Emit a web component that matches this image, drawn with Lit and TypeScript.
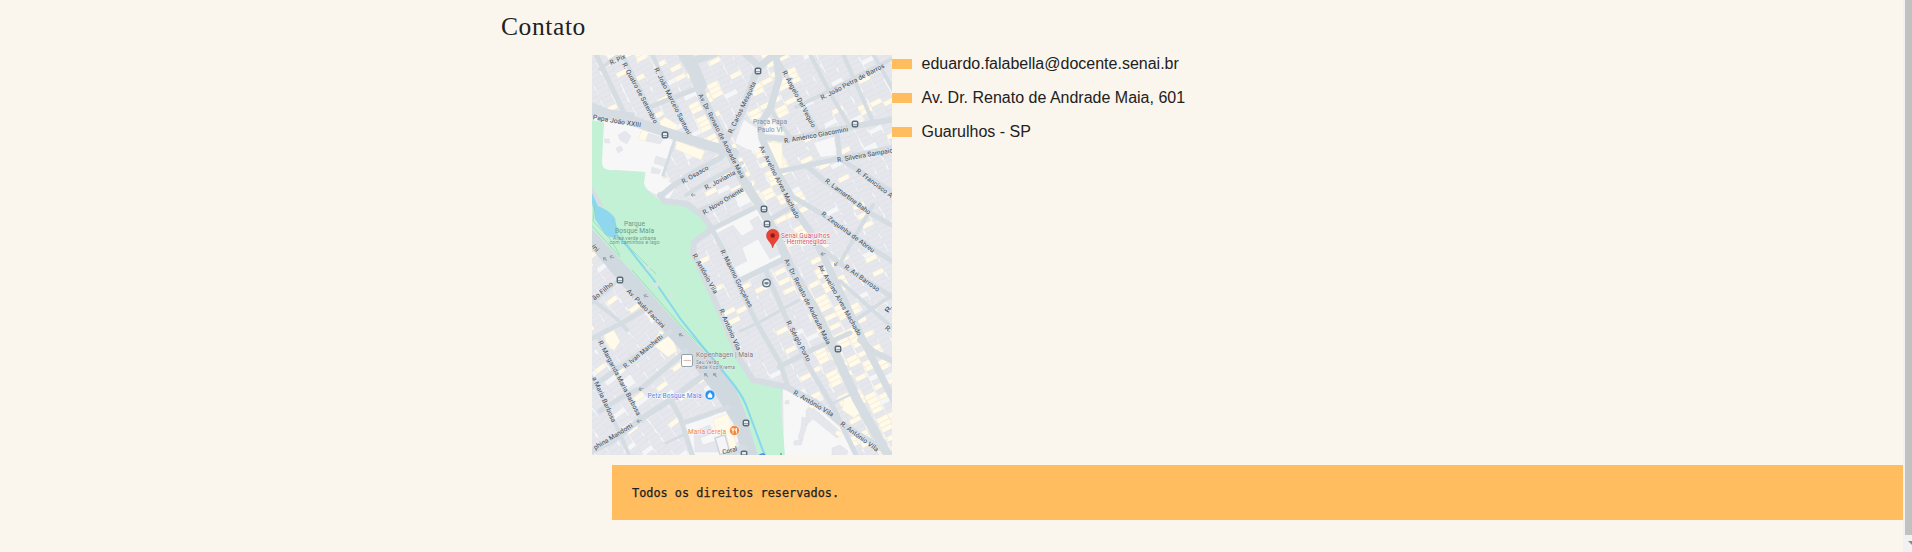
import { LitElement, html, svg, css } from "lit";
import { customElement } from "lit/decorators.js";

type Point = [number, number];
type Street = { w: number; pts: Point[]; avenue?: boolean };
type Label = [number, number, number, number, string];

const streets: Street[] = [
  { w: 10, pts: [[-3, 55], [35, 64], [73, 77], [128, 94], [142, 98]] },
  { w: 5, pts: [[-3, 49], [18, 57], [40, 60]] },
  { w: 5, pts: [[3, -3], [35, 64]] },
  { w: 4, pts: [[8, 14], [30, -2]] },
  { w: 4, pts: [[30, -1], [66, 70]] },
  { w: 4, pts: [[60, -1], [99, 82]] },
  { w: 13, pts: [[91, -4], [102, 15], [108, 30]] },
  { w: 9, avenue: true, pts: [[106, 25], [110, 42], [131, 84], [151, 125], [168, 151], [185, 181], [198, 211], [228, 264], [245, 302], [265, 345], [297, 402]] },
  { w: 5, pts: [[58, 52], [88, 40], [109, 32]] },
  { w: 8, pts: [[97, 8], [125, -3]] },
  { w: 3, pts: [[83, 84], [71, 120]] },
  { w: 6, pts: [[70, 140], [82, 130], [103, 117], [128, 103], [137, 92]] },
  { w: 4, pts: [[94, 140], [120, 124], [150, 108]] },
  { w: 7, pts: [[133, 86], [150, 58], [161, 25], [166, 13], [178, 3], [192, -3]] },
  { w: 7, pts: [[151, -3], [168, 12]] },
  { w: 7, avenue: true, pts: [[184, 0], [187, 24], [178, 54], [168, 70], [170, 84], [184, 114], [198, 148], [218, 176], [231, 200], [261, 264], [276, 295], [303, 348]] },
  { w: 4, pts: [[187, 7], [200, 30], [225, 75], [228, 80]] },
  { w: 4, pts: [[204, 52], [225, 42], [260, 24], [302, 3]] },
  { w: 4, pts: [[218, -1], [238, 38], [258, 72]] },
  { w: 4, pts: [[251, -1], [281, 67]] },
  { w: 4, pts: [[281, -1], [302, 36]] },
  { w: 6, pts: [[170, 82], [198, 84], [258, 72], [303, 64]] },
  { w: 4, pts: [[178, 54], [198, 82]] },
  { w: 5, pts: [[185, 117], [245, 104], [303, 92]] },
  { w: 5, pts: [[245, 77], [248, 104], [275, 121], [303, 139]] },
  { w: 5, pts: [[216, 112], [235, 128], [278, 158], [303, 172]] },
  { w: 5, pts: [[188, 120], [201, 142], [228, 158], [281, 194], [303, 208]] },
  { w: 5, pts: [[228, 192], [251, 211], [288, 234], [303, 244]] },
  { w: 5, pts: [[179, 164], [201, 151]] },
  { w: 6, pts: [[145, 227], [196, 202]] },
  { w: 5, pts: [[120, 174], [150, 159], [168, 150]] },
  { w: 4, pts: [[281, 150], [248, 208]] },
  { w: 4, pts: [[248, 226], [303, 275]] },
  { w: 6, pts: [[68, 140], [72, 146], [95, 149], [111, 161], [120, 174], [102, 187], [101, 198], [115, 228], [131, 264], [148, 305], [161, 325], [195, 332], [225, 348], [248, 368], [281, 388], [303, 402]] },
  { w: 4, pts: [[106, 156], [130, 145], [158, 129]] },
  { w: 5, pts: [[120, 174], [131, 194], [150, 238], [165, 268], [188, 308], [196, 332]] },
  { w: 5, pts: [[174, 216], [195, 265], [215, 308], [241, 352], [265, 402]] },
  { w: 5, pts: [[187, 312], [220, 295], [258, 278]] },
  { w: 3, pts: [[148, 276], [166, 268], [207, 245]] },
  { w: 2, pts: [[241, 348], [264, 337]] },
  { w: 6, pts: [[268, 285], [282, 297], [303, 307]] },
  { w: 4, pts: [[265, 264], [303, 238]] },
  { w: 5, pts: [[78, 277], [31, 310], [-3, 334]] },
  { w: 4, pts: [[6, 281], [28, 325], [50, 366]] },
  { w: 4, pts: [[-3, 317], [23, 368], [38, 402]] },
  { w: 5, pts: [[94, 296], [51, 332], [30, 342], [8, 356]] },
  { w: 6, pts: [[112, 320], [78, 345], [46, 366], [20, 386], [-3, 398]] },
  { w: 5, pts: [[77, 342], [88, 362], [101, 402]] },
  { w: 5, pts: [[91, 368], [137, 352]] },
  { w: 4, pts: [[-3, 250], [12, 238], [28, 224]] },
  { w: 4, pts: [[-3, 242], [25, 264], [35, 275]] },
  { w: 5, pts: [[-3, 285], [30, 268], [54, 254]] },
  { w: 3, pts: [[74, 388], [100, 376]] },
  { w: 7, pts: [[130, 402], [152, 393]] },
];

const labels: Label[] = [
  [18, 8, 33, 1, "R. Pix"],
  [32, 8, 64, 68, "R. Quatro de Setembro"],
  [64, 13, 97, 79, "R. João Marcelo Santoni"],
  [1, 62, 49, 70, "Papa João XXIII"],
  [108, 39, 151, 123, "Av. Dr. Renato de Andrade Maia"],
  [138, 78, 162, 27, "R. Carlos Mesquita"],
  [192, 16, 222, 72, "R. Ângelo Del Vequio"],
  [229, 43, 292, 10, "R. João Petra de Barros"],
  [192, 86, 256, 74, "R. Américo Giacomini"],
  [245, 105, 301, 95, "R. Silveira Sampaio"],
  [169, 91, 206, 163, "Av. Avelino Alves Machado"],
  [265, 115, 300, 141, "R. Francisco A"],
  [234, 125, 278, 158, "R. Lamartine Baho"],
  [230, 158, 282, 196, "R. Zequinha de Abreu"],
  [253, 211, 287, 235, "R. Ari Barroso"],
  [90, 127, 116, 112, "R. Osasco"],
  [113, 133, 143, 117, "R. Joviania"],
  [111, 158, 151, 134, "R. Novo Oriente"],
  [102, 199, 124, 238, "R. Antônio Vila"],
  [130, 195, 159, 252, "R. Máximo Gonçalves"],
  [129, 254, 147, 295, "R. Antônio Vila"],
  [194, 204, 237, 289, "Av. Dr. Renato de Andrade Maia"],
  [228, 210, 268, 280, "Av. Avelino Alves Machado"],
  [196, 266, 217, 306, "R. Sérgio Porto"],
  [202, 337, 241, 360, "R. Antônio Vila"],
  [249, 368, 286, 395, "R. Antônio Vila"],
  [36, 235, 72, 272, "Av. Paulo Faccini"],
  [1, 244, 20, 228, "ão Filho"],
  [1, 190, 6, 196, "ini"],
  [8, 286, 47, 360, "R. Margarida Maria Barbosa"],
  [2, 322, 22, 367, "a Maria Barbosa"],
  [32, 312, 70, 281, "R. Ivan Marchetti"],
  [2, 393, 40, 370, "phina Mandotti"],
  [294, 257, 299, 250, "R."],
  [294, 272, 299, 276, "R."],
];

const stops: Point[] = [[73, 80], [166, 16], [263, 69], [172, 154], [175, 169], [28, 225], [246, 294], [154, 368], [152, 399]];
const arrows: [number, number, number][] = [[13, 204, 40], [20, 202, 20], [54, 241, 20], [89, 280, 25], [114, 320, 40], [123, 320, 50], [231, 199, -10], [244, 209, -50], [49, 334, -20], [47, 366, -20], [101, 140, 0]];

const path = (pts: Point[]) => "M" + pts.map((p) => p.join(" ")).join("L");

const noise = (a: number, b: number) => {
  const n = Math.sin(a * 127.1 + b * 311.7) * 43758.5453;
  return n - Math.floor(n);
};

const segmentDistance = (x: number, y: number, a: Point, b: Point) => {
  const dx = b[0] - a[0];
  const dy = b[1] - a[1];
  const t = Math.max(0, Math.min(1, ((x - a[0]) * dx + (y - a[1]) * dy) / (dx * dx + dy * dy)));
  return Math.hypot(x - a[0] - t * dx, y - a[1] - t * dy);
};

const avenues = streets.filter((s) => s.avenue);
const nearAvenue = (x: number, y: number) =>
  avenues.some((s) => s.pts.slice(1).some((p, i) => segmentDistance(x, y, s.pts[i], p) < 14));

// City lots: long plots at right angles to the streets, commercial ones along the avenues.
const lots = () => {
  const out = [];
  for (const side of [0, 1]) {
    const angle = side ? -37 : -27;
    const c = Math.cos((angle * Math.PI) / 180);
    const s = Math.sin((angle * Math.PI) / 180);
    for (let i = -20; i < 32; i++) {
      for (let j = -6; j < 100; j++) {
        const u = i * 12.5;
        const v = j * 5.2 + noise(i, 3) * 4;
        const x = u * c - v * s;
        const y = u * s + v * c;
        if (x < -12 || x > 306 || y < -10 || y > 408) continue;
        const southWest = y > 190 + x * 1.1;
        if (southWest !== Boolean(side)) continue;
        const r = noise(i + 40, j + 7);
        if (r < 0.05) continue;
        const yellow = nearAvenue(x + 5, y - 2) ? r > 0.5 : r > 0.94;
        const len = 10.4 + noise(j, i) * 2;
        out.push(svg`<rect class=${yellow ? "shop" : "lot"} x=${(u + noise(i, j) * 1.2).toFixed(1)} y=${v.toFixed(1)}
          width=${len.toFixed(1)} height="5.2" transform="rotate(${angle})"/>`);
      }
    }
  }
  return out;
};

@customElement("city-map")
class CityMap extends LitElement {
  static styles = css`
    :host { display: block; width: 300px; height: 400px; }
    .map { display: block; overflow: hidden; background: #f5f6f8; font-family: Roboto, sans-serif; }
    .lot { fill: #e5e7ec; stroke: #dadde5; stroke-width: 0.4; }
    .shop { fill: #fffaea; stroke: #f1e8cd; stroke-width: 0.5; }
    .open { fill: #f7f7f8; }
    .road { fill: none; stroke: #d5dde3; stroke-linejoin: round; stroke-linecap: round; }
    .avenue { fill: #d1d9e0; }
    .park { fill: #c2f1d5; }
    .water { fill: #8fd7ef; }
    .river { fill: none; stroke: #86d8ec; stroke-width: 2; }
    .trail { fill: none; stroke: #8bcfaa; stroke-width: 0.6; }
    .street { font-size: 6.8px; font-weight: 500; fill: #56626d; stroke: #eef1f5; stroke-width: 0.7; paint-order: stroke; }
    .place { font-size: 6.6px; fill: #6a9a8b; }
    .square { fill: #84939f; }
    .small { font-size: 4.9px; }
    .school { fill: #d8525b; stroke: #fff; stroke-width: 0.8; paint-order: stroke; }
    .store { fill: #5580e8; stroke: #fff; stroke-width: 0.8; paint-order: stroke; }
    .food { fill: #ee8140; stroke: #fff; stroke-width: 0.8; paint-order: stroke; }
    .brand { fill: #74767d; stroke: #f2f3f5; stroke-width: 0.6; paint-order: stroke; }
    .arrow { fill: none; stroke: #929ca8; stroke-width: 1; }
  `;

  private street([x1, y1, x2, y2, text]: Label) {
    const angle = (Math.atan2(y2 - y1, x2 - x1) * 180) / Math.PI;
    return svg`<text class="street" textLength=${Math.hypot(x2 - x1, y2 - y1).toFixed(1)} lengthAdjust="spacingAndGlyphs"
      transform="translate(${x1} ${y1}) rotate(${angle.toFixed(1)})" dy="2.3">${text}</text>`;
  }

  render() {
    return html`<svg class="map" width="300" height="400" viewBox="0 0 300 400">
      ${lots()}
      <path class="open" d="M0 63L35 66L80 84L71 123L84 131L76 146L50 132L54 117L10 114Z"/>
      <g class="lot">
        <path d="M26 80l7-4 6 5-4 8-7-4zM24 93l5-2 2 4-5 3zM12 84l5 0 1 4-5 0zM56 78l16 5-4 6-14-3zM64 101l12 4-2 7-12-4zM60 112l9 3-2 4-8-1z"/>
      </g>
      <path class="shop" d="M50 75l7 2-4 9-7-2zM85 86l28 10-4 9-26-11zM68 66l5-4 13 8-3 6-15-6z"/>
      <path class="open" d="M122 176L168 153L194 201L149 224L132 194Z"/>
      <path class="lot" d="M126 178l15-8 9 11 12-7-4-8 8-5 22 38-10 5-12-20-16 9 5 13-12 6z"/>
      <path class="lot" d="M130 181l11-6 7 13-11 7z"/>
      <path class="open" d="M191 334L222 349L247 370L264 402L192 402Z"/>
      <path class="lot" d="M214 355l5-4 31 27-5 5-24-19-7 6zM210 362l7 2-7 22-4-3 3-10zM202 386l9-2-2 6-7 0zM193 346l4-1 0 4-4 0zM240 393l8-3 8 6-2 6-14 0z"/>
      <path class="shop" d="M218 348l5 3-3 3-4-3zM245 375l6 3-3 4-5-3zM252 343l13-5 6 17-9 8-12-8z"/>
      <path class="open" d="M90 371L139 355L147 386L128 400L101 400Z"/>
      <path class="lot" d="M102 376l16-6 3 8-13 5 3 7 15-5 4 12-27 0z"/>
      <path d="M123 383l10-3 5 18-10 2z" fill="#f4f5f7" stroke="#cdd5df" stroke-width="1.5"/>
      <path class="shop" d="M121 364l15-5 9 33-7 3-4-17-9 2z"/>
      <path class="open" d="M152 65L166 74L172 98L155 94L143 88ZM176 60L193 81L173 79ZM222 88L242 82L244 100L229 102Z"/>
      <path class="shop" d="M173 87l17 1 1 25-7 1-11-24zM68 275l13 9 4 12-9 6-15-12zM11 278l9-6 8 14-6 10-8-9z"/>
      <path class="park" d="M-1 65L12 67L10 107Q10 115 18 115L51 117Q54 118 52 128Q53 134 61 140L68 146Q84 151 95 149Q107 154 111 161L118 174Q101 184 101 194L115 228L131 264L148 305Q152 321 161 325L191 333Q188 350 190 365L193 401L165 401L151 352L131 315L111 295L78 265L41 218L-1 173Z"/>
      <path class="road" stroke-width="4" d="M-1 134L9 150"/>
      <path class="avenue" d="M-1 173L41 218L81 264L111 295L131 315L144 334L154 360L166 401L151 401L141 368L125 342L95 302L61 264L31 231L-1 193Z"/>
      ${streets.map((s) => svg`<path class="road" stroke-width=${s.w} d=${path(s.pts)}/>`)}
      <path class="water" d="M0 138L6 151Q17 155 23 163L26 181Q20 185 13 179L3 164Q2 151 -1 147Z"/>
      <path class="river" d="M25 180L35 191L61 224L90 266L111 292L138 325Q149 338 154 350L173 401"/>
      <path class="trail" d="M0 171L28 202M3 150L1 166L18 184L28 200M20 165L38 193L64 219M40 215L90 272L130 312"/>
      <g fill="#dbe5e0"><circle cx="56" cy="213" r="2.3"/><circle cx="64" cy="230" r="2.6"/><ellipse cx="79" cy="241" rx="2.6" ry="1.8"/></g>
      ${arrows.map(([x, y, a]) => svg`<path class="arrow" transform="translate(${x} ${y}) rotate(${a})" d="M2.5 0H-2M0-1.7L-2 0L0 1.7"/>`)}
      ${labels.map((l) => this.street(l))}
      <text class="street" transform="translate(131 399.500) rotate(-14)" textLength="15" lengthAdjust="spacingAndGlyphs">Coral</text>
      ${stops.map(([x, y]) => svg`<g transform="translate(${x} ${y})">
        <rect x="-3.4" y="-3.4" width="6.8" height="6.8" rx="2" fill="#5b6b79"/>
        <rect x="-2" y="-2" width="4" height="4" rx="0.6" fill="#e9eef2"/>
        <path d="M-2 .7H2" stroke="#5b6b79" stroke-width=".7"/></g>`)}
      <g transform="translate(174.5 228)"><path d="M-2 4L0 7L2 4Z" fill="#fff"/><circle r="4.6" fill="#667985"/><circle r="3.1" fill="#eef2f5"/><path d="M-2-1H2V.5Q0 3-2 .5Z" fill="#758792"/></g>

      <g text-anchor="middle">
        <text class="place square" x="178" y="69" textLength="34">Praça Papa</text>
        <text class="place square" x="178" y="77" textLength="25">Paulo VI</text>
        <text class="place" x="42.500" y="171" textLength="21">Parque</text>
        <text class="place" x="42.500" y="177.500" textLength="39">Bosque Maia</text>
        <text class="place small" x="42.500" y="184.800" textLength="43">Área verde urbana</text>
        <text class="place small" x="42.500" y="189.300" textLength="50">com caminhos e lago</text>
      </g>
      <g font-size="6.6">
        <text class="school" x="189" y="182.500" textLength="49">Senai Guarulhos</text>
        <text class="school" x="191.500" y="188.500" textLength="48">- Hermenegildo...</text>
        <text class="store" x="55.500" y="343" textLength="54">Petz Bosque Maia</text>
        <text class="food" x="96" y="378.500" textLength="38">Maria Cereja</text>
        <text class="brand" x="104" y="302" textLength="57">Kopenhagen | Maia</text>
        <text class="brand small" x="104" y="309" textLength="23">Seu Verão</text>
        <text class="brand small" x="104" y="313.500" textLength="39">Pede Kop Krema</text>
      </g>
      <path d="M180.700 193C179.500 187 174.500 185.500 174.500 180.500A6.200 6.200 0 0 1 187 180.500C187 185.500 182 187 180.700 193Z" fill="#e94335" stroke="#c93229" stroke-width=".5"/>
      <circle cx="180.700" cy="180.600" r="2.300" fill="#8f1c17"/>
      <rect x="89.500" y="299.500" width="11" height="12" rx="1.500" fill="#fff" stroke="#98a0a8"/>
      <path d="M91.500 305.500H99" stroke="#e6bba9" stroke-width="1"/>
      <circle cx="118" cy="340" r="5" fill="#2293f3" stroke="#fff" stroke-width=".6"/>
      <path d="M116 339.500h4v3h-4zM117 339.500v-1q1-1.500 2 0v1" fill="#fff" stroke="#fff" stroke-width=".5"/>
      <circle cx="142.500" cy="375.500" r="5" fill="#f1893c" stroke="#fff" stroke-width=".6"/>
      <path d="M140 373v2q1 1 2 0v-2M141 373v5.500M144.500 378.500v-5.500q-1.500 1-1 3h1" fill="none" stroke="#fff" stroke-width=".8"/>
      <g fill="none" stroke-width="1.5"><path d="M167 401A4 4 0 0 1 173 400" stroke="#527fe5"/><path d="M189 398V401" stroke="#55b58b"/></g>
    </svg>`;
  }
}

@customElement("app-root")
class AppRoot extends LitElement {
  static styles = css`
    :host { display: flex; height: 552px; overflow: hidden; background: #faf5ed; color: #212121; }
    .page { flex: 1; min-width: 0; }
    .title { margin: 0 0 0 501px; height: 55px; box-sizing: border-box; padding-top: 12px; font: 400 25.5px/30px "Liberation Serif", serif; letter-spacing: 0.6px; }
    .contact { display: flex; margin-left: 592px; height: 400px; }
    .list { list-style: none; margin: 0; padding: 0; font: 16px/18px Arial, "Liberation Sans", sans-serif; }
    .item { display: flex; align-items: center; gap: 9.5px; height: 18px; margin-bottom: 16px; }
    .mark { width: 20px; height: 10px; background: #ffbd5f; }
    .footer { box-sizing: border-box; margin: 10px 0 0 612px; height: 55px; padding: 1px 20px 0; background: #ffbd5f; display: flex; align-items: center; font: 400 11.87px/16px "DejaVu Sans Mono", monospace; -webkit-text-stroke: 0.25px #212121; white-space: pre; }
    .scrollbar { width: 9px; background: #f1f1f1; display: flex; flex-direction: column; align-items: flex-end; }
    .thumb { width: 7px; height: 535px; background: #c1c1c1; }
    .down { width: 4px; height: 4px; margin-top: 6px; background: #8b8b8b; clip-path: polygon(0 0, 100% 0, 100% 100%); }
  `;

  render() {
    const lines = ["eduardo.falabella@docente.senai.br", "Av. Dr. Renato de Andrade Maia, 601", "Guarulhos - SP"];
    return html`
      <main class="page">
        <h1 class="title">Contato</h1>
        <section class="contact">
          <city-map></city-map>
          <ul class="list">
            ${lines.map((line) => html`<li class="item"><span class="mark"></span><span>${line}</span></li>`)}
          </ul>
        </section>
        <footer class="footer">Todos os direitos reservados.</footer>
      </main>
      <div class="scrollbar"><div class="thumb"></div><div class="down"></div></div>
    `;
  }
}
